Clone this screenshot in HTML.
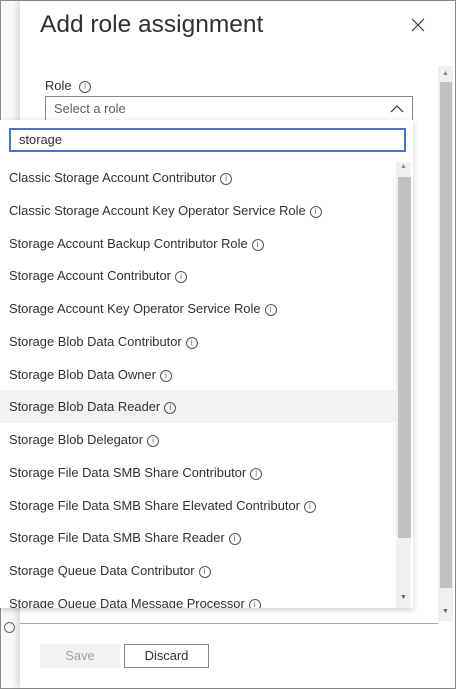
<html><head><style>
body{margin:0;width:456px;height:689px;overflow:hidden;font-family:"Liberation Sans",sans-serif;background:#fff;position:relative}
.ab{position:absolute}
.it{position:absolute;left:0;width:396px;height:33px;line-height:33px;padding-left:9px;font-size:12.9px;color:#323130;box-sizing:border-box;white-space:nowrap}
.i{display:inline-block;width:10px;height:10px;border:1px solid #555;border-radius:50%;font-size:8px;line-height:10px;text-align:center;vertical-align:middle;margin-left:4px;color:#555;font-style:normal}
</style></head><body>
<div class="ab" style="left:0;top:0;width:454px;height:687px;border:1px solid #8a8a8a"></div>
<div class="ab" style="left:1px;top:1px;width:19px;height:687px;background:#f8f8f8"></div>
<div class="ab" style="left:4px;top:622px;width:9px;height:9px;border:1px solid #666;border-radius:50%"></div>
<div class="ab" style="left:20px;top:1px;width:434px;height:687px;background:#fff;box-shadow:-3px 0 6px rgba(0,0,0,.12)"></div>
<div class="ab" style="left:40px;top:11px;font-size:24.5px;color:#323130">Add role assignment</div>
<svg class="ab" style="left:411px;top:18px" width="14" height="14"><path d="M1 1L13 13M13 1L1 13" stroke="#333" stroke-width="1.1"/></svg>
<div class="ab" style="left:438px;top:66px;width:15px;height:555px;background:#f0f0f0"></div>
<div class="ab" style="left:440px;top:82px;width:12px;height:506px;background:#c1c1c1"></div>
<div class="ab" style="left:442px;top:70px;font-size:7px;color:#888">▲</div>
<div class="ab" style="left:442px;top:608px;font-size:7px;color:#666">▼</div>
<div class="ab" style="left:45px;top:78px;font-size:12.9px;color:#323130">Role <span class="i">i</span></div>
<div class="ab" style="left:45px;top:96px;height:23px;border:1px solid #8a8886;font-size:12.9px;color:#605e5c;line-height:23px;padding-left:8px;width:358px">Select a role<svg style="position:absolute;right:8px;top:7px" width="14" height="9"><path d="M1 8L7 2L13 8" stroke="#333" stroke-width="1.2" fill="none"/></svg></div>
<div class="ab" style="left:20px;top:623px;width:418px;height:1px;background:#aaa"></div>
<div class="ab" style="left:40px;top:644px;width:80px;height:24px;background:#f3f2f1;color:#a19f9d;font-size:12.9px;text-align:center;line-height:24px">Save</div>
<div class="ab" style="left:124px;top:644px;width:83px;height:22px;border:1px solid #8a8886;color:#323130;font-size:12.9px;text-align:center;line-height:22px">Discard</div>
<div class="ab" style="left:0;top:120px;width:413px;height:488px;background:#fff;box-shadow:0 2px 6px rgba(0,0,0,.2);overflow:hidden">
<div class="ab" style="left:9px;top:8px;height:20px;border:2px solid #4a76c6;font-size:12.9px;line-height:20px;padding-left:8px;width:385px;color:#323130">storage</div>
<div class="ab" style="left:396px;top:42px;width:15px;height:446px;background:#f0f0f0"></div>
<div class="ab" style="left:398px;top:57px;width:13px;height:361px;background:#c1c1c1"></div>
<div class="ab" style="left:400px;top:43px;font-size:7px;color:#888">▲</div>
<div class="ab" style="left:400px;top:474px;font-size:7px;color:#666">▼</div>
<div class="it" style="top:41px">Classic Storage Account Contributor<span class="i">i</span></div>
<div class="it" style="top:74px">Classic Storage Account Key Operator Service Role<span class="i">i</span></div>
<div class="it" style="top:107px">Storage Account Backup Contributor Role<span class="i">i</span></div>
<div class="it" style="top:139px">Storage Account Contributor<span class="i">i</span></div>
<div class="it" style="top:172px">Storage Account Key Operator Service Role<span class="i">i</span></div>
<div class="it" style="top:205px">Storage Blob Data Contributor<span class="i">i</span></div>
<div class="it" style="top:238px">Storage Blob Data Owner<span class="i">i</span></div>
<div class="it" style="top:270px;background:#f3f2f1">Storage Blob Data Reader<span class="i">i</span></div>
<div class="it" style="top:303px">Storage Blob Delegator<span class="i">i</span></div>
<div class="it" style="top:336px">Storage File Data SMB Share Contributor<span class="i">i</span></div>
<div class="it" style="top:369px">Storage File Data SMB Share Elevated Contributor<span class="i">i</span></div>
<div class="it" style="top:401px">Storage File Data SMB Share Reader<span class="i">i</span></div>
<div class="it" style="top:434px">Storage Queue Data Contributor<span class="i">i</span></div>
<div class="it" style="top:467px">Storage Queue Data Message Processor<span class="i">i</span></div>
</div>
</body></html>
